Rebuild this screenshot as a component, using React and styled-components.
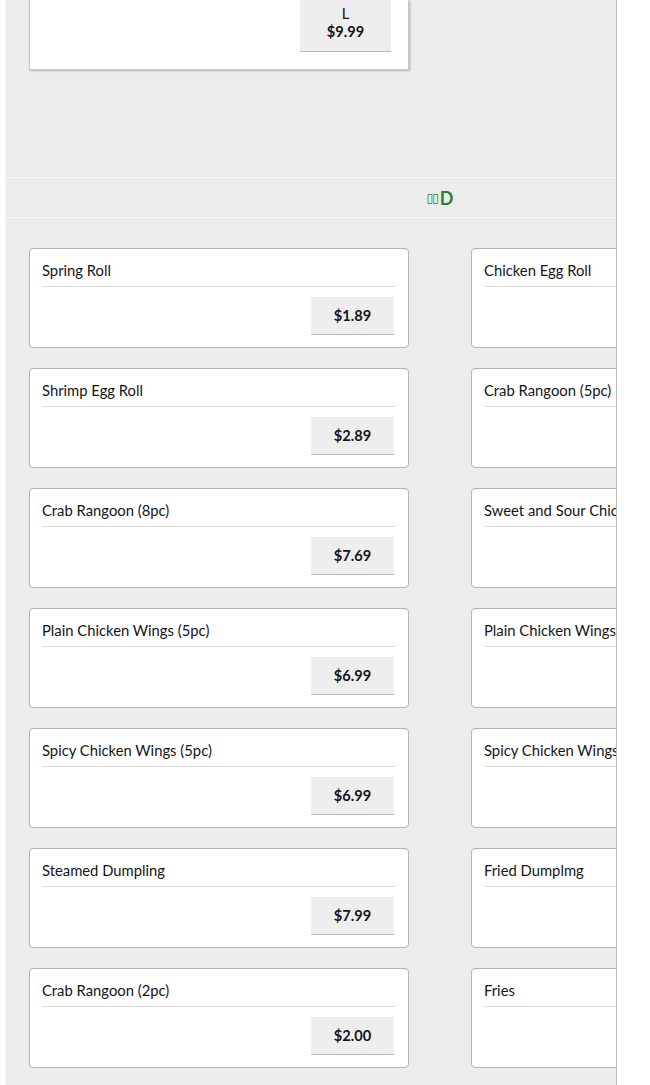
import React from "react";
import styled, { createGlobalStyle } from "styled-components";

const GlobalStyle = createGlobalStyle`
  html, body {
    margin: 0;
    padding: 0;
    background: #ffffff;
    font-family: "Lato", "Open Sans", sans-serif;
    color: #151515;
  }
`;

const items = [
  ["Spring Roll", "$1.89", "Chicken Egg Roll"],
  ["Shrimp Egg Roll", "$2.89", "Crab Rangoon (5pc)"],
  ["Crab Rangoon (8pc)", "$7.69", "Sweet and Sour Chicken"],
  ["Plain Chicken Wings (5pc)", "$6.99", "Plain Chicken Wings (10pc)"],
  ["Spicy Chicken Wings (5pc)", "$6.99", "Spicy Chicken Wings (10pc)"],
  ["Steamed Dumpling", "$7.99", "Fried Dumplmg"],
  ["Crab Rangoon (2pc)", "$2.00", "Fries"],
];

export default function App() {
  return (
    <>
      <GlobalStyle />
      <Page>
        <Panel>
          <Content>
            <TopSection>
              <SizeCard>
                <PriceButton $tall>
                  <span>L</span>
                  <span>$9.99</span>
                </PriceButton>
              </SizeCard>
            </TopSection>

            <CategoryHeader>
              <Tofu>{"\u25AF\u25AF"}</Tofu>D
            </CategoryHeader>

            <Grid>
              {items.map(([left, price, right], i) => (
                <React.Fragment key={i}>
                  <ItemCard>
                    <Title>{left}</Title>
                    <Actions>
                      <PriceButton>{price}</PriceButton>
                    </Actions>
                  </ItemCard>
                  <ItemCard>
                    <Title>{right}</Title>
                  </ItemCard>
                </React.Fragment>
              ))}
            </Grid>
          </Content>
        </Panel>
      </Page>
    </>
  );
}

const Page = styled.div`
  display: flex;
  min-height: 100vh;
  padding-left: 5px;
  background: #ffffff;
`;

const Panel = styled.div`
  width: 610px;
  height: 1085px;
  overflow: hidden;
  background: #ececec;
  border-left: 1px solid #f6f6f6;
  border-right: 1px solid #b9b9b9;
`;

const Content = styled.div`
  width: 868px;
`;

const TopSection = styled.div`
  padding: 0 23px 107px;
`;

const SizeCard = styled.div`
  width: 380px;
  height: 70px;
  box-sizing: border-box;
  background: #ffffff;
  border: 1px solid #c8c8c8;
  border-top: none;
  box-shadow: 1px 1px 2px rgba(0, 0, 0, 0.25);
  display: flex;
  justify-content: flex-end;
  align-items: flex-end;
  padding: 0 17px 17px 0;
`;

const CategoryHeader = styled.div`
  height: 39px;
  border-top: 1px solid #f9f9f9;
  border-bottom: 1px solid #f9f9f9;
  display: flex;
  align-items: center;
  justify-content: center;
  color: #2f7d2f;
  font-family: "Lato", sans-serif;
  font-weight: 700;
  font-size: 18px;
`;

const Tofu = styled.span`
  font-family: "DejaVu Sans", sans-serif;
  font-weight: 400;
  font-size: 12px;
  letter-spacing: -1px;
  margin-right: 2px;
`;

const Grid = styled.div`
  display: grid;
  grid-template-columns: 380px 380px;
  column-gap: 62px;
  row-gap: 20px;
  padding: 30px 23px 20px;
`;

const ItemCard = styled.div`
  height: 100px;
  box-sizing: border-box;
  background: #ffffff;
  border: 1px solid #b3b3b3;
  border-radius: 4px;
  padding: 11px 12px 0;
  display: flex;
  flex-direction: column;
`;

const Title = styled.div`
  font-size: 14.8px;
  line-height: 20px;
  padding-bottom: 6px;
  border-bottom: 1px solid #dedede;
  white-space: nowrap;
`;

const Actions = styled.div`
  display: flex;
  justify-content: flex-end;
  padding: 10px 2px 0 0;
`;

const PriceButton = styled.div`
  width: ${(p) => (p.$tall ? "91px" : "83px")};
  height: ${(p) => (p.$tall ? "52px" : "38px")};
  box-sizing: border-box;
  background: #eeeeee;
  border-bottom: 1px solid #b8b8b8;
  display: flex;
  flex-direction: column;
  align-items: center;
  justify-content: ${(p) => (p.$tall ? "flex-start" : "center")};
  padding-top: ${(p) => (p.$tall ? "5px" : "0")};
  font-size: 14.6px;
  line-height: 18px;
  font-weight: 700;
  color: #151515;

  span:first-child {
    font-weight: 400;
  }
`;
